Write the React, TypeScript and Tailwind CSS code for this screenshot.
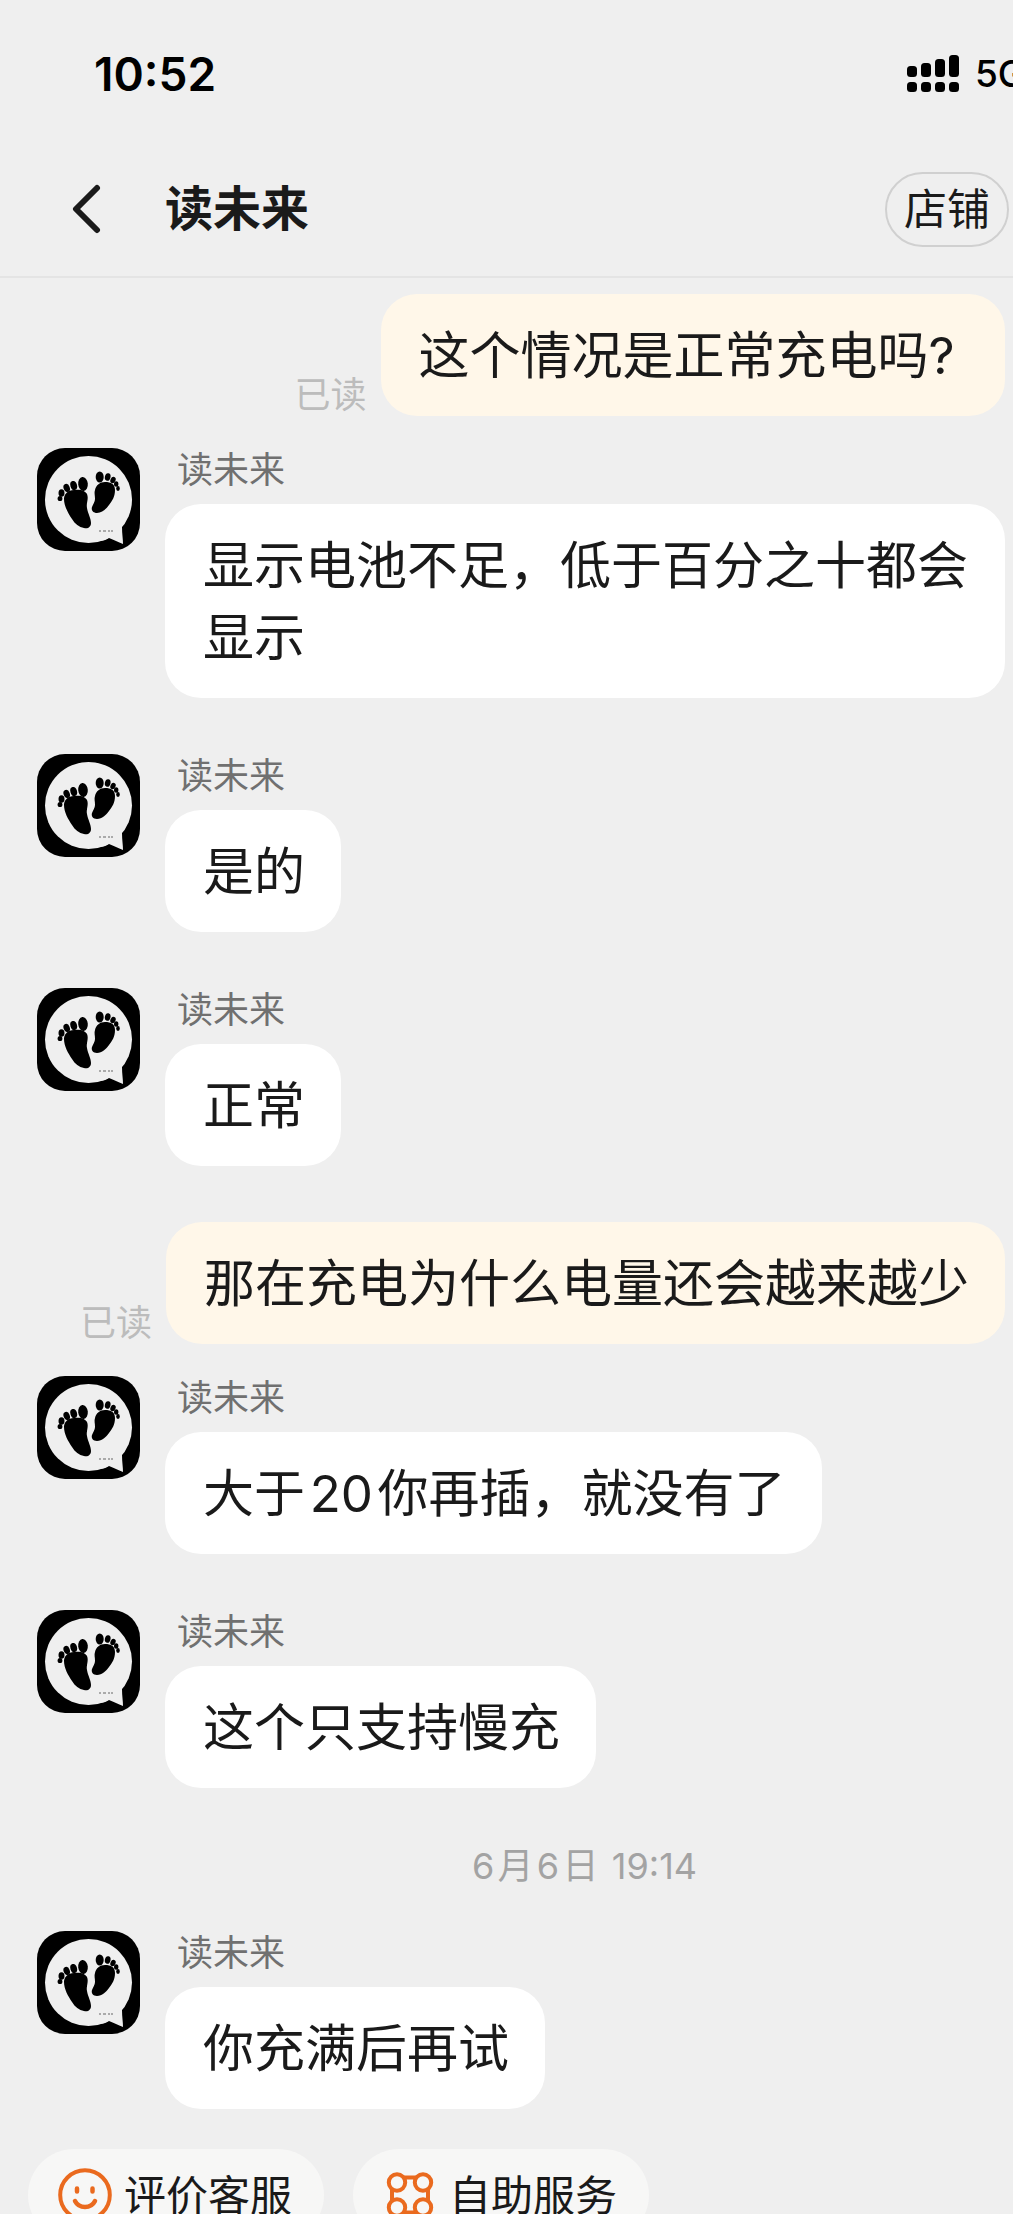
import type { ReactNode } from "react";

type Message = { id: number; from: "shop" | "me"; text: string };

const SHOP_NAME = "读未来";

const EARLIER: Message[] = [
  { id: 1, from: "me", text: "这个情况是正常充电吗?\u00A0" },
  { id: 2, from: "shop", text: "显示电池不足，低于百分之十都会显示" },
  { id: 3, from: "shop", text: "是的" },
  { id: 4, from: "shop", text: "正常" },
  { id: 5, from: "me", text: "那在充电为什么电量还会越来越少" },
  { id: 6, from: "shop", text: "大于\u200A20\u200A你再插，就没有了" },
  { id: 7, from: "shop", text: "这个只支持慢充" },
];

const LATER: Message[] = [{ id: 8, from: "shop", text: "你充满后再试" }];

function SignalIcon() {
  return (
    <svg width="52" height="38" viewBox="0 0 52 38" aria-hidden="true">
      <rect x="0" y="11" width="10" height="11" rx="3.500" />
      <rect x="14" y="8" width="10" height="14" rx="3.500" />
      <rect x="28" y="4" width="10" height="18" rx="3.500" />
      <rect x="42" y="0" width="10" height="22" rx="3.500" />
      <rect x="0" y="27" width="10" height="10" rx="3.500" />
      <rect x="14" y="27" width="10" height="10" rx="3.500" />
      <rect x="28" y="27" width="10" height="10" rx="3.500" />
      <rect x="42" y="27" width="10" height="10" rx="3.500" />
    </svg>
  );
}

function Avatar() {
  return (
    <svg viewBox="0 0 103 103" className="size-[103px] shrink-0 rounded-[28px] bg-black" aria-hidden="true">
      {/* speech bubble */}
      <circle cx="51.500" cy="51.500" r="43.500" fill="#efefef" />
      <path d="M62 93c4 0 7-1 10-3 5 2 9 4 14 6 0-5-1-10-1-17l-12-4Z" fill="#efefef" />
      {/* left foot */}
      <path d="M27 51c0-5 4-9 10-9 5-1 11 0 13 4 2 5-1 9 0 14 1 6 4 10 4 15 0 4-3 6-7 5-5-1-9-4-12-9-4-6-8-13-8-20Z" />
      <ellipse cx="46" cy="36" rx="4.800" ry="7" transform="rotate(-6 46 36)" />
      <ellipse cx="36.700" cy="37.500" rx="3.300" ry="4.600" transform="rotate(-16 36.7 37.5)" />
      <ellipse cx="29.700" cy="40" rx="3.100" ry="4.200" transform="rotate(-20 29.7 40)" />
      <ellipse cx="24.500" cy="45" rx="3" ry="3.800" />
      <ellipse cx="23" cy="50.500" rx="2.400" ry="2.600" />
      {/* right foot */}
      <path d="M58 42c1-5 5-8 10-8 6 0 10 2 10 8 0 7-3 11-6 15-3 4-7 8-12 8-4 0-6-3-5-6 1-3 3-5 3-8 0-4-1-6 0-9Z" />
      <ellipse cx="62.700" cy="29" rx="4" ry="5.600" />
      <ellipse cx="70.700" cy="29" rx="2.800" ry="3.800" transform="rotate(14 70.7 29)" />
      <ellipse cx="76" cy="32" rx="2.500" ry="3.400" transform="rotate(24 76 32)" />
      <ellipse cx="79.200" cy="36" rx="2.200" ry="2.800" />
      <ellipse cx="81" cy="40.500" rx="1.800" ry="2.400" />
      <path d="M62 83h2M66 83h3M71 83h2M74 83h2" stroke="#aaa" strokeWidth="2" />
    </svg>
  );
}

function SmileIcon() {
  return (
    <svg width="54" height="54" viewBox="0 0 54 54" fill="none" stroke="#ea6a1e" strokeLinecap="round" aria-hidden="true">
      <circle cx="27" cy="27" r="24.800" strokeWidth="4" />
      <path d="M19 20.500v3M34.500 20.500v3" strokeWidth="4.500" />
      <path d="M17 33c4 8 16 8 20 0" strokeWidth="4.500" />
    </svg>
  );
}

function ServiceIcon() {
  return (
    <svg width="54" height="54" viewBox="0 0 54 54" fill="none" stroke="#ea6a1e" strokeWidth="4" aria-hidden="true">
      <circle cx="14" cy="14.500" r="8.200" />
      <circle cx="40" cy="14.500" r="8.200" />
      <circle cx="14" cy="39.500" r="8.200" />
      <circle cx="40" cy="39.500" r="8.200" />
      <path d="M20 9.500h14M20 44.500h14M9 21v12M45 21v12" />
    </svg>
  );
}

function Bubble({ className, children }: { className: string; children: ReactNode }) {
  return (
    <p className={`rounded-[36px] pb-6 pl-[38px] pr-9 pt-[26px] text-[51px] leading-[72px] ${className}`}>{children}</p>
  );
}

function ShopMessage({ text }: { text: string }) {
  return (
    <article className="flex gap-[25px] pl-[37px] pr-2">
      <Avatar />
      <div className="flex min-w-0 flex-col items-start">
        <div className="mb-3 pl-3 text-[36px] leading-[44px] text-[#707070]">{SHOP_NAME}</div>
        <Bubble className="bg-white">{text}</Bubble>
      </div>
    </article>
  );
}

function MyMessage({ text }: { text: string }) {
  return (
    <article className="flex items-end justify-end gap-[14px] pr-2">
      <span className="shrink-0 text-[36px] leading-[42px] text-[#bcbcbc]">已读</span>
      <Bubble className="bg-[#fff7e9]">{text}</Bubble>
    </article>
  );
}

function MessageList({ messages }: { messages: Message[] }) {
  return (
    <>
      {messages.map((m, i) => (
        <div key={m.id} className={i === 0 ? "" : messages[i - 1].from === "me" ? "mt-8" : "mt-14"}>
          {m.from === "me" ? <MyMessage text={m.text} /> : <ShopMessage text={m.text} />}
        </div>
      ))}
    </>
  );
}

function QuickAction({ icon, label }: { icon: ReactNode; label: string }) {
  return (
    <button className="flex h-[92px] shrink-0 items-center gap-3 rounded-full bg-[#f7f7f6] pl-[30px] pr-8 text-[42px]">
      {icon}
      {label}
    </button>
  );
}

export default function App() {
  return (
    <div className="flex h-screen flex-col overflow-hidden bg-[#efefef] font-['Inter','Noto_Sans_CJK_SC',sans-serif] text-[#1a1a1a]">
      <div className="flex h-[148px] shrink-0 items-center justify-between pl-[94px] text-black">
        <span className="text-[46px] font-semibold">10:52</span>
        <div className="flex w-[106px] items-center gap-4 whitespace-nowrap">
          <span className="shrink-0">
            <SignalIcon />
          </span>
          <span className="text-[37px] font-medium">5G</span>
        </div>
      </div>

      <header className="flex h-[130px] shrink-0 items-center border-b-2 border-[#e4e4e4] pb-[6px] pl-[72px] pr-1">
        <button aria-label="返回">
          <svg width="30" height="50" viewBox="0 0 30 50" fill="none" stroke="#1a1a1a" strokeWidth="6" strokeLinecap="round" strokeLinejoin="round">
            <path d="M25 4 4 25l21 21" />
          </svg>
        </button>
        <h1 className="ml-[63px] flex-1 text-[48px] font-bold leading-none">{SHOP_NAME}</h1>
        <button className="h-[75px] rounded-full border-2 border-[#d0d0d0] px-[17px] text-[43px] leading-none">店铺</button>
      </header>

      <main className="shrink-0 pt-4">
        <MessageList messages={EARLIER} />
        <time className="mb-11 mt-[57px] block pl-[156px] text-center text-[36px] leading-[42px] text-[#a3a3a3]">
          {"6\u200A月\u200A6\u200A日\u200A 19:14"}
        </time>
        <MessageList messages={LATER} />
      </main>

      <footer className="flex shrink-0 gap-[29px] pl-7 pt-10">
        <QuickAction icon={<SmileIcon />} label="评价客服" />
        <QuickAction icon={<ServiceIcon />} label="自助服务" />
      </footer>
    </div>
  );
}
